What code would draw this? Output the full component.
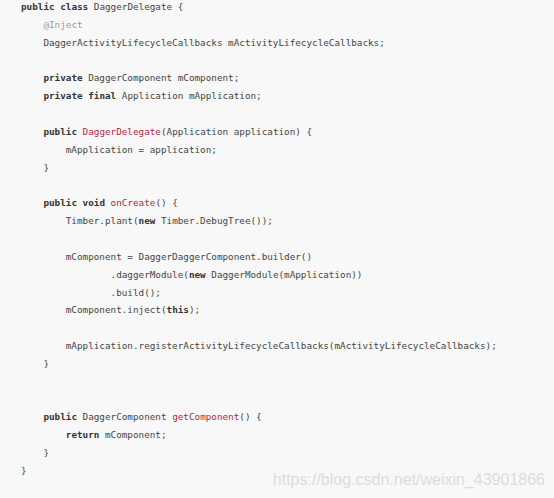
import React from "react";

type Tok = { t: string; k?: "kw" | "fn" | "an" };

const kw = (t: string): Tok => ({ t, k: "kw" });
const fn = (t: string): Tok => ({ t, k: "fn" });
const an = (t: string): Tok => ({ t, k: "an" });
const tx = (t: string): Tok => ({ t });

const lines: Tok[][] = [
  [kw("public"), tx(" "), kw("class"), tx(" DaggerDelegate {")],
  [tx("    "), an("@Inject")],
  [tx("    DaggerActivityLifecycleCallbacks mActivityLifecycleCallbacks;")],
  [],
  [tx("    "), kw("private"), tx(" DaggerComponent mComponent;")],
  [tx("    "), kw("private"), tx(" "), kw("final"), tx(" Application mApplication;")],
  [],
  [tx("    "), kw("public"), tx(" "), fn("DaggerDelegate"), tx("(Application application) {")],
  [tx("        mApplication = application;")],
  [tx("    }")],
  [],
  [tx("    "), kw("public"), tx(" "), kw("void"), tx(" "), fn("onCreate"), tx("() {")],
  [tx("        Timber.plant("), kw("new"), tx(" Timber.DebugTree());")],
  [],
  [tx("        mComponent = DaggerDaggerComponent.builder()")],
  [tx("                .daggerModule("), kw("new"), tx(" DaggerModule(mApplication))")],
  [tx("                .build();")],
  [tx("        mComponent.inject("), kw("this"), tx(");")],
  [],
  [tx("        mApplication.registerActivityLifecycleCallbacks(mActivityLifecycleCallbacks);")],
  [tx("    }")],
  [],
  [],
  [tx("    "), kw("public"), tx(" DaggerComponent "), fn("getComponent"), tx("() {")],
  [tx("        "), kw("return"), tx(" mComponent;")],
  [tx("    }")],
  [tx("}")],
];

const cls: Record<string, string> = {
  kw: "font-bold text-[#333]",
  fn: "text-[#b0283c]",
  an: "text-[#9a9a9a]",
};

export default function App() {
  return (
    <div className="relative w-[554px] h-[498px] overflow-hidden bg-[#f8f8f8]">
      <pre
        className="-mt-[2px] pl-[21px] text-[9.3px] leading-[17.85px] text-[#444]"
        style={{ fontFamily: '"DejaVu Sans Mono", "Liberation Mono", monospace' }}
      >
        {lines.map((ln, i) => (
          <div key={i} className="h-[17.85px] whitespace-pre">
            {ln.map((tok, j) => (
              <span key={j} className={tok.k ? cls[tok.k] : undefined}>
                {tok.t}
              </span>
            ))}
          </div>
        ))}
      </pre>
      <div
        className="absolute right-[9px] bottom-[10px] text-[16px] leading-none text-[#dcdcdc]"
        style={{ fontFamily: '"Liberation Sans", Arial, sans-serif' }}
      >
        https://blog.csdn.net/weixin_43901866
      </div>
    </div>
  );
}
